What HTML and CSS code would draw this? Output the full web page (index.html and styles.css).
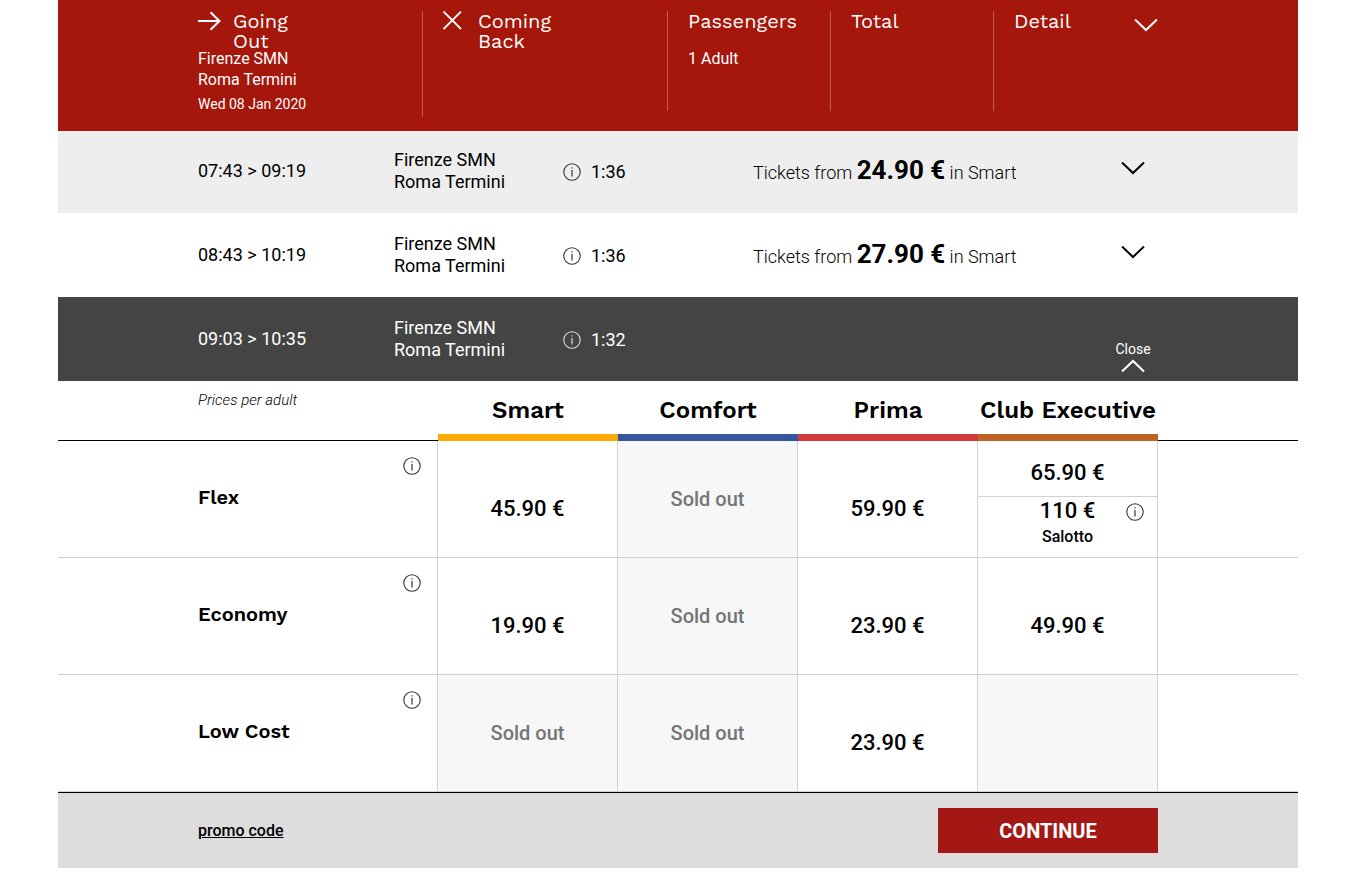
FILE: index.html
```html
<!DOCTYPE html>
<html lang="en">
<head>
    <meta charset="UTF-8">
    <meta name="viewport" content="width=device-width, initial-scale=1.0">
    <title>Choose your train</title>
    <link rel="stylesheet" href="styles.css">
</head>
<body>
    <svg class="sprite" aria-hidden="true">
        <symbol id="info" viewBox="0 0 18 18">
            <circle cx="9" cy="9" r="8.2" fill="none" stroke="currentColor" stroke-width="1.1"/>
            <path d="M9 7v6.6M9 4.2v1.4" fill="none" stroke="currentColor" stroke-width="1.2"/>
        </symbol>
        <symbol id="chevron" viewBox="0 0 24 14">
            <path d="M1 1.5l11 10.500 11-10.500" fill="none" stroke="currentColor" stroke-width="2"/>
        </symbol>
        <symbol id="arrow" viewBox="0 0 24 20">
            <path d="M0 10h22M12.500 1.200l9 8.800-9 8.800" fill="none" stroke="currentColor" stroke-width="2"/>
        </symbol>
        <symbol id="cross" viewBox="0 0 20 20">
            <path d="M.5.5l17.500 17.500M18 .5l-17.500 17.500" fill="none" stroke="currentColor" stroke-width="1.800"/>
        </symbol>
    </svg>

    <div class="container">
        <header class="summary">
            <section class="summary-item going">
                <h2><svg class="icon-arrow"><use href="#arrow"/></svg><span>Going<br>Out</span></h2>
                <p>Firenze SMN</p>
                <p>Roma Termini</p>
                <p class="date">Wed 08 Jan 2020</p>
            </section>
            <section class="summary-item">
                <h2><svg class="icon-cross"><use href="#cross"/></svg><span>Coming<br>Back</span></h2>
            </section>
            <section class="summary-item">
                <h2>Passengers</h2>
                <p>1 Adult</p>
            </section>
            <section class="summary-item">
                <h2>Total</h2>
            </section>
            <section class="summary-item detail">
                <h2>Detail</h2>
                <button type="button" aria-label="Show detail"><svg class="icon-chevron"><use href="#chevron"/></svg></button>
            </section>
        </header>

        <main>
            <div class="train shaded">
                <div class="time">07:43 &gt; 09:19</div>
                <div class="stations">Firenze SMN<br>Roma Termini</div>
                <div class="duration"><button type="button" aria-label="Train info"><svg class="icon-info"><use href="#info"/></svg></button>1:36</div>
                <div class="from">Tickets from <strong>24.90 €</strong> in Smart</div>
                <button type="button" class="toggle" aria-label="Open"><svg class="icon-chevron"><use href="#chevron"/></svg></button>
            </div>
            <div class="train">
                <div class="time">08:43 &gt; 10:19</div>
                <div class="stations">Firenze SMN<br>Roma Termini</div>
                <div class="duration"><button type="button" aria-label="Train info"><svg class="icon-info"><use href="#info"/></svg></button>1:36</div>
                <div class="from">Tickets from <strong>27.90 €</strong> in Smart</div>
                <button type="button" class="toggle" aria-label="Open"><svg class="icon-chevron"><use href="#chevron"/></svg></button>
            </div>
            <div class="train open">
                <div class="time">09:03 &gt; 10:35</div>
                <div class="stations">Firenze SMN<br>Roma Termini</div>
                <div class="duration"><button type="button" aria-label="Train info"><svg class="icon-info"><use href="#info"/></svg></button>1:32</div>
                <div class="from"></div>
                <button type="button" class="toggle">Close<svg class="icon-chevron up"><use href="#chevron"/></svg></button>
            </div>

            <table class="prices">
                <colgroup>
                    <col>
                    <col class="col-fare">
                    <col class="col-level" span="4">
                    <col>
                </colgroup>
                <thead>
                    <tr>
                        <td></td>
                        <td class="note">Prices per adult</td>
                        <th scope="col" class="smart">Smart</th>
                        <th scope="col" class="comfort">Comfort</th>
                        <th scope="col" class="prima">Prima</th>
                        <th scope="col" class="club">Club Executive</th>
                        <td></td>
                    </tr>
                </thead>
                <tbody>
                    <tr>
                        <td class="side"></td>
                        <th scope="row"><div class="fare">Flex<button type="button" aria-label="Flex info"><svg class="icon-info"><use href="#info"/></svg></button></div></th>
                        <td><button type="button" class="price">45.90 €</button></td>
                        <td class="sold">Sold out</td>
                        <td><button type="button" class="price">59.90 €</button></td>
                        <td>
                            <div class="split">
                                <button type="button" class="price">65.90 €</button>
                                <div class="salotto">
                                    <button type="button" class="price">110 €<small>Salotto</small></button>
                                    <button type="button" class="salotto-info" aria-label="Salotto info"><svg class="icon-info"><use href="#info"/></svg></button>
                                </div>
                            </div>
                        </td>
                        <td class="side"></td>
                    </tr>
                    <tr>
                        <td class="side"></td>
                        <th scope="row"><div class="fare">Economy<button type="button" aria-label="Economy info"><svg class="icon-info"><use href="#info"/></svg></button></div></th>
                        <td><button type="button" class="price">19.90 €</button></td>
                        <td class="sold">Sold out</td>
                        <td><button type="button" class="price">23.90 €</button></td>
                        <td><button type="button" class="price">49.90 €</button></td>
                        <td class="side"></td>
                    </tr>
                    <tr>
                        <td class="side"></td>
                        <th scope="row"><div class="fare">Low Cost<button type="button" aria-label="Low Cost info"><svg class="icon-info"><use href="#info"/></svg></button></div></th>
                        <td class="sold">Sold out</td>
                        <td class="sold">Sold out</td>
                        <td><button type="button" class="price">23.90 €</button></td>
                        <td class="sold"></td>
                        <td class="side"></td>
                    </tr>
                </tbody>
            </table>
        </main>

        <footer class="actions">
            <a href="#promo">promo code</a>
            <button type="button" class="continue">CONTINUE</button>
        </footer>
    </div>
</body>
</html>
```
FILE: styles.css
```css
* {
    box-sizing: border-box;
}

body {
    margin: 0;
    padding-right: 16px;
    font-family: Roboto, Arial, sans-serif;
    font-size: 18px;
    color: #000;
    background-color: #fff;
}

h2, p {
    margin: 0;
}

button {
    padding: 0;
    border: none;
    background: none;
    font: inherit;
    color: inherit;
    cursor: pointer;
}

svg {
    display: block;
    flex: none;
}

.sprite {
    position: absolute;
    width: 0;
    height: 0;
}

.icon-info {
    width: 18px;
    height: 18px;
    color: #333;
}

.icon-chevron {
    width: 24px;
    height: 14px;
}

.icon-chevron.up {
    transform: rotate(180deg);
}

.icon-arrow {
    width: 24px;
    height: 20px;
}

.icon-cross {
    width: 20px;
    height: 20px;
    margin-right: 4px;
}

.container {
    max-width: 1240px;
    margin: 0 auto;
}

/* header, train rows and footer share a centred 960px column */
.summary, .train, .actions {
    padding-left: calc(50% - 480px);
    padding-right: calc(50% - 480px);
}

.summary {
    display: grid;
    grid-template-columns: 225px 245px 163px 163px 1fr;
    align-items: start;
    padding-top: 11px;
    padding-bottom: 14px;
    background-color: #a5160b;
    color: #fff;
    font-size: 16px;
    line-height: 21px;
}

.summary-item {
    min-height: 100px;
    padding-left: 20px;
    border-right: 1px solid rgba(255, 255, 255, 0.3);
}

.summary-item.going {
    padding-left: 0;
    padding-bottom: 3px;
}

.summary-item h2 {
    display: flex;
    gap: 11px;
    height: 37px;
    font-family: "Work Sans", Inter, sans-serif;
    font-size: 20px;
    font-weight: 400;
    line-height: 20px;
}

.summary-item .date {
    margin-top: 4px;
    font-size: 14px;
    line-height: 20px;
}

.summary-item.detail {
    display: flex;
    justify-content: space-between;
    align-items: start;
    border-right: none;
}

.detail button {
    margin-top: 7px;
}

.train {
    display: grid;
    grid-template-columns: 196px 169px 190px 1fr 50px;
    align-items: center;
    height: 84px;
    line-height: 22px;
}

.train.shaded {
    height: 82px;
    padding-bottom: 2px;
    background-color: #eee;
}

.train.open {
    background-color: #444;
    color: #fff;
}

.train.open .icon-info {
    color: #ddd;
}

.duration {
    display: flex;
    align-items: center;
    gap: 10px;
    padding-top: 2px;
}

.from {
    font-weight: 300;
}

.from strong {
    font-size: 26px;
    font-weight: 700;
}

.toggle {
    display: flex;
    flex-direction: column;
    align-items: center;
    padding-bottom: 6px;
    font-size: 14px;
    line-height: 20px;
}

.open .toggle {
    align-self: end;
    padding-bottom: 8px;
}

.prices {
    width: 100%;
    table-layout: fixed;
    border-collapse: separate;
    border-spacing: 0;
}

.col-fare {
    width: 240px;
}

.col-level {
    width: 180px;
}

.prices td, .prices th {
    padding: 0;
}

.prices thead td, .prices thead th {
    height: 60px;
    border-bottom: 1px solid #000;
}

.prices thead .note {
    padding-top: 9px;
    vertical-align: top;
    font-size: 15px;
    font-style: italic;
    font-weight: 300;
    line-height: 20px;
}

.prices thead th {
    padding-top: 5px;
    border-bottom-width: 7px;
    font-family: "Work Sans", Inter, sans-serif;
    font-size: 24px;
    font-weight: 600;
    line-height: 28px;
    white-space: nowrap;
}

.prices thead .smart { border-bottom-color: #ffa900; }
.prices thead .comfort { border-bottom-color: #3656a0; }
.prices thead .prima { border-bottom-color: #d4373c; }
.prices thead .club { border-bottom-color: #be6323; }

.prices tbody td, .prices tbody th {
    height: 117px;
    border-right: 1px solid #d2d2d2;
    border-bottom: 1px solid #d2d2d2;
    text-align: center;
}

.prices tbody .side {
    border-right: none;
}

.fare {
    display: flex;
    justify-content: space-between;
    height: 116px;
    padding-right: 16px;
    font-family: "Work Sans", Inter, sans-serif;
    font-size: 20px;
    font-weight: 600;
    line-height: 112px;
}

.fare button {
    align-self: start;
    margin-top: 16px;
}

.price {
    padding-top: 20px;
    font-size: 22px;
    font-weight: 500;
    line-height: 26px;
}

.prices .sold {
    background-color: #f7f7f7;
    color: #757575;
    font-size: 20px;
    font-weight: 500;
}

.split {
    display: flex;
    flex-direction: column;
    height: 116px;
}

.split .price {
    height: 55px;
    padding-top: 8px;
}

.salotto {
    position: relative;
    border-top: 1px solid #d2d2d2;
}

.salotto .price {
    height: 60px;
    padding: 0 0 6px;
}

.salotto small {
    display: block;
    font-size: 16px;
}

.salotto-info {
    position: absolute;
    top: 6px;
    right: 13px;
}

.actions {
    display: flex;
    justify-content: space-between;
    align-items: center;
    height: 76px;
    border-top: 1px solid #000;
    background-color: #ddd;
}

.actions a {
    color: #000;
    font-size: 16px;
    font-weight: 500;
}

.continue {
    width: 220px;
    height: 45px;
    background-color: #a31815;
    color: #fff;
    font-size: 20px;
    font-weight: 700;
}
```
